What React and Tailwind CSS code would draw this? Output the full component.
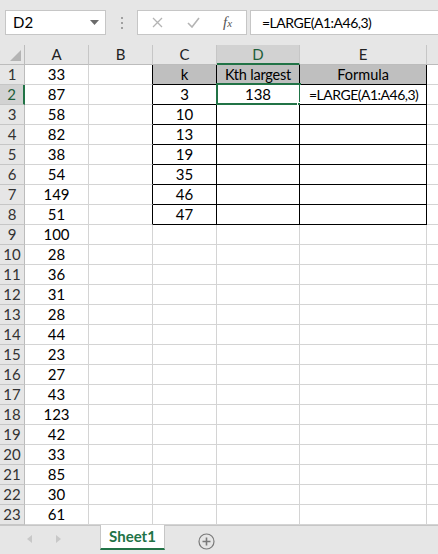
import React from 'react';

const colA = [33, 87, 58, 82, 38, 54, 149, 51, 100, 28, 36, 31, 28, 44, 23, 27, 43, 123, 42, 33, 85, 30, 61];
const colC = ['k', '3', '10', '13', '19', '35', '46', '47'];

const widths = ['w-[64px]', 'w-[64px]', 'w-[64px]', 'w-[83px]', 'w-[127px]'];

const Cell = ({ w, inTable, leftEdge, fill, children, align = 'center', selected }) => (
    <div
        className={`relative h-[20px] shrink-0 flex items-center ${w} ${align === 'left' ? 'justify-start pl-[9px]' : 'justify-center'} border-b border-r ${inTable ? 'border-black' : 'border-[#d4d4d4]'} ${fill ? 'bg-[#bfbfbf]' : 'bg-white'} ${leftEdge ? 'border-r-black' : ''} whitespace-nowrap`}
    >
        {children}
        {selected && (
            <>
                <div className="absolute left-[-1px] top-[-2px] right-[-2px] bottom-[-1px] border-2 border-[#217346] pointer-events-none"></div>
                <div className="absolute right-[-4px] bottom-[-4px] w-[6px] h-[6px] bg-[#217346] border border-white"></div>
            </>
        )}
    </div>
);

const App = () => {
    return (
        <div className="w-[438px] h-[554px] overflow-hidden bg-[#e6e6e6] text-black" style={{ fontFamily: 'Lato, "Liberation Sans", sans-serif' }}>
            {/* Formula bar */}
            <div className="h-[45px] flex items-start pt-[10px] pl-[5px]">
                <div className="w-[101px] h-[25px] bg-white border border-[#c6c6c6] flex items-center justify-between pl-[7px] pr-[6px] text-[15px]">
                    <span>D2</span>
                    <svg width="9" height="5" viewBox="0 0 9 5"><path d="M0 0h9L4.5 5z" fill="#6b6b6b" /></svg>
                </div>
                <div className="w-[31px] h-[25px] flex flex-col items-center justify-center gap-[3px]">
                    <span className="w-[2px] h-[2px] bg-[#a0a0a0]"></span>
                    <span className="w-[2px] h-[2px] bg-[#a0a0a0]"></span>
                    <span className="w-[2px] h-[2px] bg-[#a0a0a0]"></span>
                </div>
                <div className="w-[110px] h-[25px] bg-white border border-[#c6c6c6] flex items-center">
                    <svg className="ml-[14px]" width="11" height="11" viewBox="0 0 11 11"><path d="M1 1l9 9M10 1l-9 9" stroke="#b4b4b4" strokeWidth="1.3" /></svg>
                    <svg className="ml-[24px]" width="13" height="11" viewBox="0 0 13 11"><path d="M1 6l4 4 7-9" stroke="#b4b4b4" strokeWidth="1.6" fill="none" /></svg>
                    <span className="ml-[23px] text-[15px] italic text-[#555]" style={{ fontFamily: '"Liberation Serif", serif' }}>f<span className="text-[11px]">x</span></span>
                </div>
                <div className="ml-[3px] flex-1 h-[25px] bg-white border border-[#c6c6c6] border-r-0 flex items-center pl-[11px] text-[14px] tracking-[-0.5px]">
                    =LARGE(A1:A46,3)
                </div>
            </div>

            {/* Column headers */}
            <div className="flex h-[20px] text-[15px] text-[#222]">
                <div className="w-[25px] h-[20px] shrink-0 border-r border-b border-[#bcbcbc] relative">
                    <svg className="absolute right-[3px] bottom-[3px]" width="11" height="11" viewBox="0 0 11 11"><path d="M11 0v11H0z" fill="#b4b4b4" /></svg>
                </div>
                {['A', 'B', 'C', 'D', 'E'].map((c, i) => (
                    <div
                        key={c}
                        className={`${widths[i]} h-[20px] shrink-0 flex items-center justify-center border-r ${c === 'D' ? 'bg-[#d2d2d2] border-b-2 border-b-[#217346] text-[#1e5e3a]' : 'border-b border-b-[#bcbcbc]'} border-r-[#c6c6c6]`}
                    >
                        {c}
                    </div>
                ))}
                <div className="flex-1 h-[20px] border-b border-[#bcbcbc]"></div>
            </div>

            {/* Rows */}
            <div className="text-[15px]">
                {colA.map((a, r) => {
                    const inTable = r < 8;
                    return (
                        <div key={r} className="flex h-[20px]">
                            <div className={`w-[25px] h-[20px] shrink-0 flex items-center justify-center border-b border-[#c6c6c6] ${r === 1 ? 'bg-[#d2d2d2] border-r-2 border-r-[#217346] text-[#1e5e3a]' : 'border-r border-r-[#bcbcbc] text-[#333]'}`}>
                                {r + 1}
                            </div>
                            <Cell w={widths[0]}>{a}</Cell>
                            <Cell w={widths[1]} leftEdge={inTable}></Cell>
                            <Cell w={widths[2]} inTable={inTable} fill={r === 0}>{inTable ? colC[r] : ''}</Cell>
                            <Cell w={widths[3]} inTable={inTable} fill={r === 0} selected={r === 1}>
                                {r === 0 ? <span className="text-[14.5px] tracking-[-0.2px]">Kth largest</span> : r === 1 ? '138' : ''}
                            </Cell>
                            <Cell w={widths[4]} inTable={inTable} fill={r === 0} align={r === 1 ? 'left' : 'center'}>
                                {r === 0 ? <span className="text-[14.5px]">Formula</span> : r === 1 ? <span className="text-[14px] tracking-[-0.5px]">=LARGE(A1:A46,3)</span> : ''}
                            </Cell>
                            <div className="flex-1 h-[20px] bg-white border-b border-[#d4d4d4]"></div>
                        </div>
                    );
                })}
            </div>

            {/* Sheet tabs */}
            <div className="h-[29px] flex items-start border-t border-[#c6c6c6]">
                <div className="w-[100px] h-[26px] flex items-center">
                    <svg className="ml-[27px]" width="5" height="8" viewBox="0 0 5 8"><path d="M5 0v8L0 4z" fill="#c8c8c8" /></svg>
                    <svg className="ml-[24px]" width="5" height="8" viewBox="0 0 5 8"><path d="M0 0v8l5-4z" fill="#c8c8c8" /></svg>
                </div>
                <div className="w-[65px] h-[25px] -mt-px bg-white border-x border-[#c6c6c6] border-b-2 border-b-[#217346] flex items-center justify-center text-[15px] font-bold text-[#217346]">
                    Sheet1
                </div>
                <div className="ml-[33px] mt-[7px]">
                    <svg width="17" height="17" viewBox="0 0 17 17">
                        <circle cx="8.5" cy="8.5" r="7.5" fill="none" stroke="#7a7a7a" strokeWidth="1.2" />
                        <path d="M8.5 4.5v8M4.5 8.5h8" stroke="#7a7a7a" strokeWidth="1.6" />
                    </svg>
                </div>
            </div>
        </div>
    );
};

export default App;
